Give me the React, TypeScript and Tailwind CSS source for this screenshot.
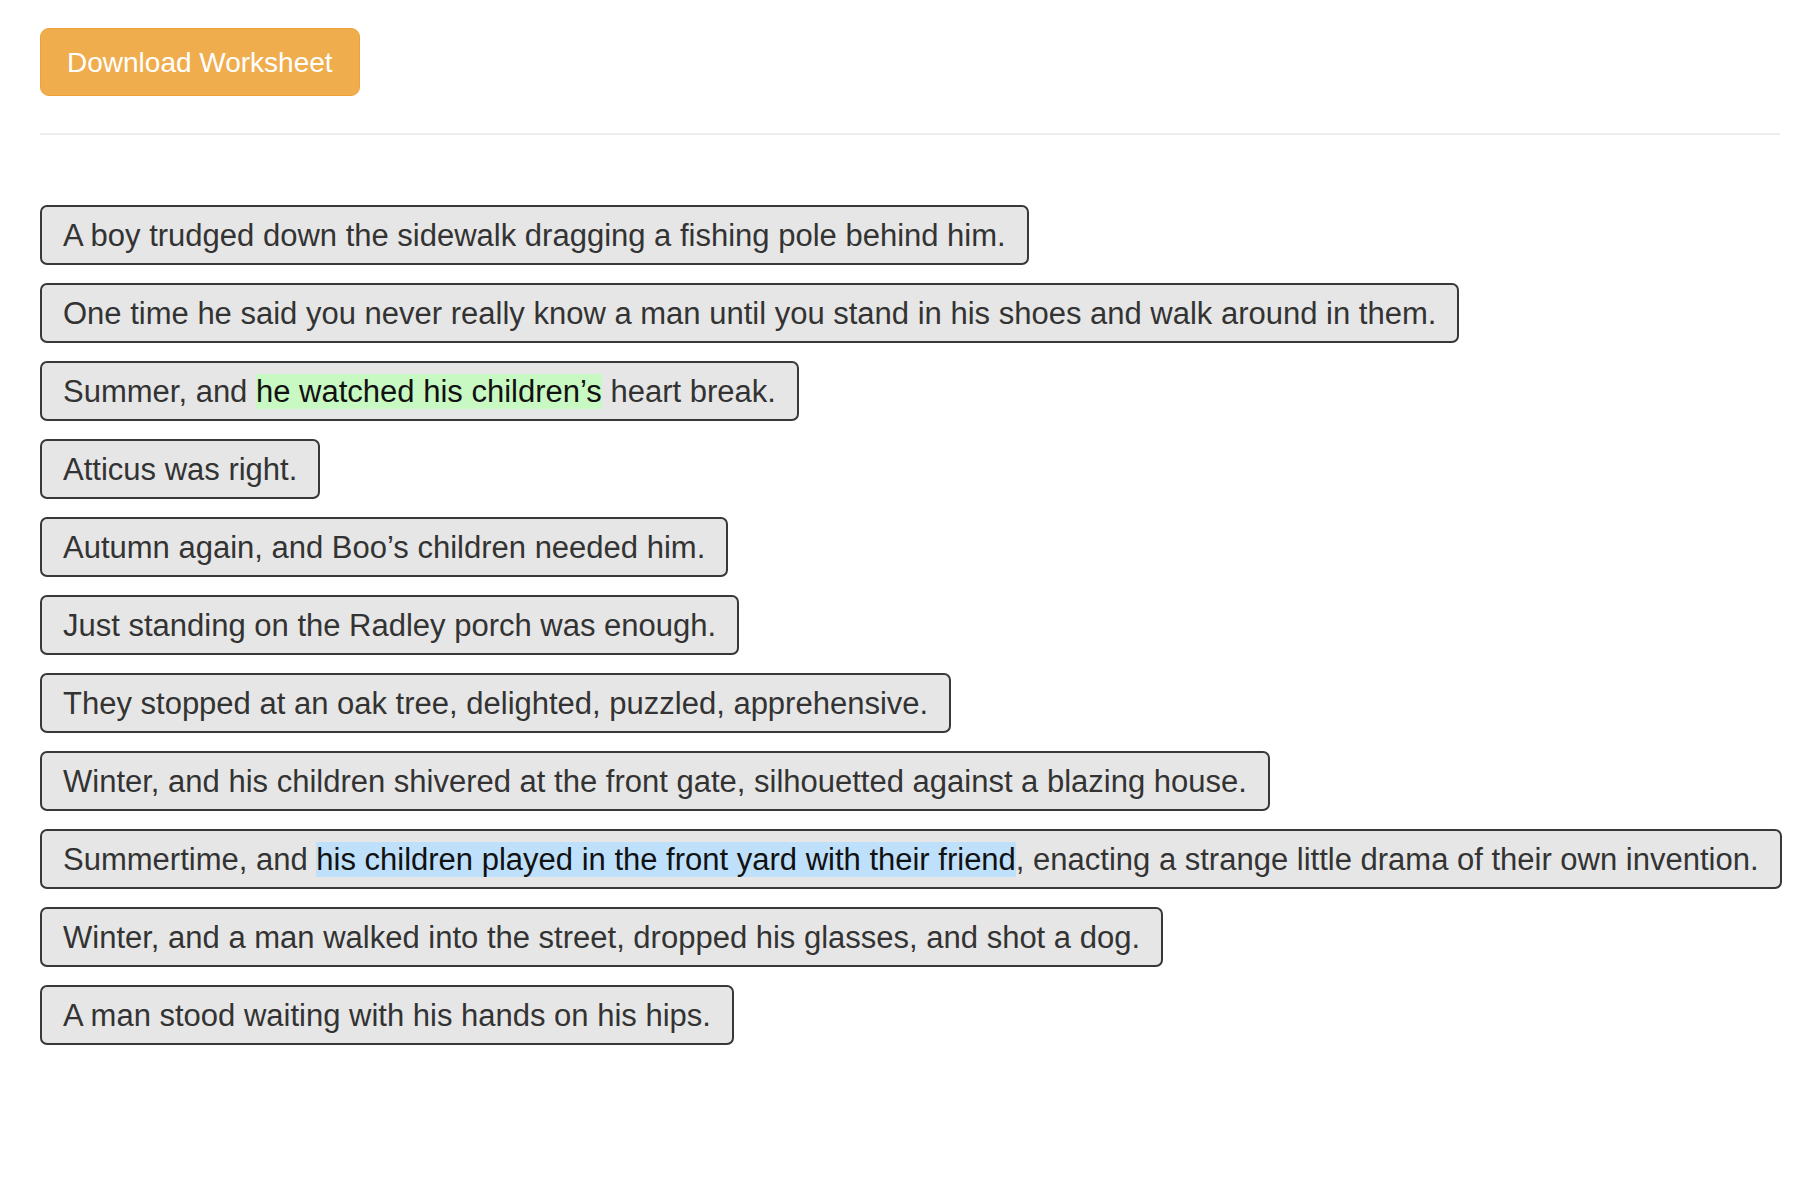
type Part = { text: string; mark?: 'green' | 'blue' }

const SENTENCES: Part[][] = [
  [{ text: 'A boy trudged down the sidewalk dragging a fishing pole behind him.' }],
  [{ text: 'One time he said you never really know a man until you stand in his shoes and walk around in them.' }],
  [
    { text: 'Summer, and ' },
    { text: 'he watched his children\u2019s', mark: 'green' },
    { text: ' heart break.' },
  ],
  [{ text: 'Atticus was right.' }],
  [{ text: 'Autumn again, and Boo\u2019s children needed him.' }],
  [{ text: 'Just standing on the Radley porch was enough.' }],
  [{ text: 'They stopped at an oak tree, delighted, puzzled, apprehensive.' }],
  [{ text: 'Winter, and his children shivered at the front gate, silhouetted against a blazing house.' }],
  [
    { text: 'Summertime, and ' },
    { text: 'his children played in the front yard with their friend', mark: 'blue' },
    { text: ', enacting a strange little drama of their own invention.' },
  ],
  [{ text: 'Winter, and a man walked into the street, dropped his glasses, and shot a dog.' }],
  [{ text: 'A man stood waiting with his hands on his hips.' }],
]

const MARK_CLASSES = {
  green: 'bg-[#c9f9c3] text-[#111]',
  blue: 'bg-[#bfe0fb] text-[#111]',
}

export default function App() {
  return (
    <div
      className="min-h-[1188px] bg-white text-[#333] pl-10 pr-[30px] pt-[28px]"
      style={{ fontFamily: '"Liberation Sans", Arial, sans-serif' }}
    >
      <button className="h-[68px] px-[26px] pt-[2px] rounded-[9px] border border-[#eea236] bg-[#f0ad4e] text-white text-[28px] leading-none">
        Download Worksheet
      </button>

      <div className="mt-[37px] h-[2px] bg-[#eeeeee]" />

      <div className="mt-[70px] flex flex-col items-start gap-[18px]">
        {SENTENCES.map((parts, i) => (
          <SentenceCard key={i} parts={parts} />
        ))}
      </div>
    </div>
  )
}

function SentenceCard({ parts }: { parts: Part[] }) {
  return (
    <div className="border-2 border-[#383838] rounded-[7px] bg-[#e6e6e6] px-[21px] pt-[9px] pb-[7px] text-[31px] leading-[40px] whitespace-nowrap">
      {parts.map((p, i) =>
        p.mark ? (
          <span key={i} className={MARK_CLASSES[p.mark]}>
            {p.text}
          </span>
        ) : (
          <span key={i}>{p.text}</span>
        ),
      )}
    </div>
  )
}
